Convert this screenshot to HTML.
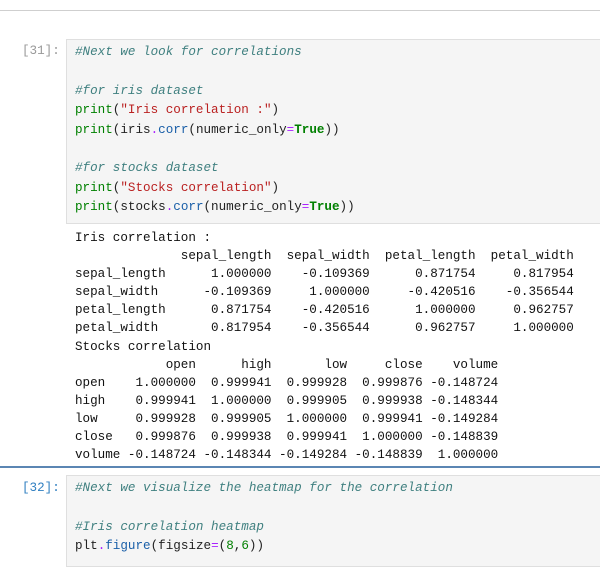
<!DOCTYPE html>
<html><head><meta charset="utf-8"><style>
body{margin:0;width:600px;height:555px;background:#fff;overflow:hidden;position:relative;font-family:"Liberation Mono",monospace;}
.top{position:absolute;left:0;top:0;width:600px;height:10px;border-bottom:1px solid #cfcfcf;}
.prompt{position:absolute;left:22px;font-size:12.6px;color:#999;}
.box{position:absolute;left:66px;right:0;background:#f5f5f5;border:1px solid #dfdfdf;border-right:none;}
pre{margin:0;font-family:"Liberation Mono",monospace;font-size:12.6px;color:#222;}
.code{position:absolute;left:75px;line-height:19.4px;}
.out{position:absolute;left:75px;line-height:18.1px;color:#111;}
.c{color:#408080;font-style:italic}
.b{color:#008000}
.s{color:#ba2121}
.k{color:#008000;font-weight:bold}
.o{color:#aa22ff}
.a{color:#1a5fa8}
.n{color:#008000}
</style></head><body>
<div class="top"></div>
<div class="box" style="top:39px;height:183px"></div>
<div class="prompt" style="top:44px">[31]:</div>
<pre class="code" style="top:43px"><span class="c">#Next we look for correlations</span>

<span class="c">#for iris dataset</span>
<span class="b">print</span>(<span class="s">"Iris correlation :"</span>)
<span class="b">print</span>(iris<span class="o">.</span><span class="a">corr</span>(numeric_only<span class="o">=</span><span class="k">True</span>))

<span class="c">#for stocks dataset</span>
<span class="b">print</span>(<span class="s">"Stocks correlation"</span>)
<span class="b">print</span>(stocks<span class="o">.</span><span class="a">corr</span>(numeric_only<span class="o">=</span><span class="k">True</span>))</pre>
<pre class="out" style="top:229px">Iris correlation :
              sepal_length  sepal_width  petal_length  petal_width
sepal_length      1.000000    -0.109369      0.871754     0.817954
sepal_width      -0.109369     1.000000     -0.420516    -0.356544
petal_length      0.871754    -0.420516      1.000000     0.962757
petal_width       0.817954    -0.356544      0.962757     1.000000
Stocks correlation
            open      high       low     close    volume
open    1.000000  0.999941  0.999928  0.999876 -0.148724
high    0.999941  1.000000  0.999905  0.999938 -0.148344
low     0.999928  0.999905  1.000000  0.999941 -0.149284
close   0.999876  0.999938  0.999941  1.000000 -0.148839
volume -0.148724 -0.148344 -0.149284 -0.148839  1.000000</pre>
<div style="position:absolute;left:0;top:466px;width:600px;height:2px;background:#5b86b3"></div>
<div class="box" style="top:475px;height:90px"></div>
<div class="prompt" style="top:481px;color:#307fc1">[32]:</div>
<pre class="code" style="top:479px"><span class="c">#Next we visualize the heatmap for the correlation</span>

<span class="c">#Iris correlation heatmap</span>
plt<span class="o">.</span><span class="a">figure</span>(figsize<span class="o">=</span>(<span class="n">8</span>,<span class="n">6</span>))</pre>
</body></html>
